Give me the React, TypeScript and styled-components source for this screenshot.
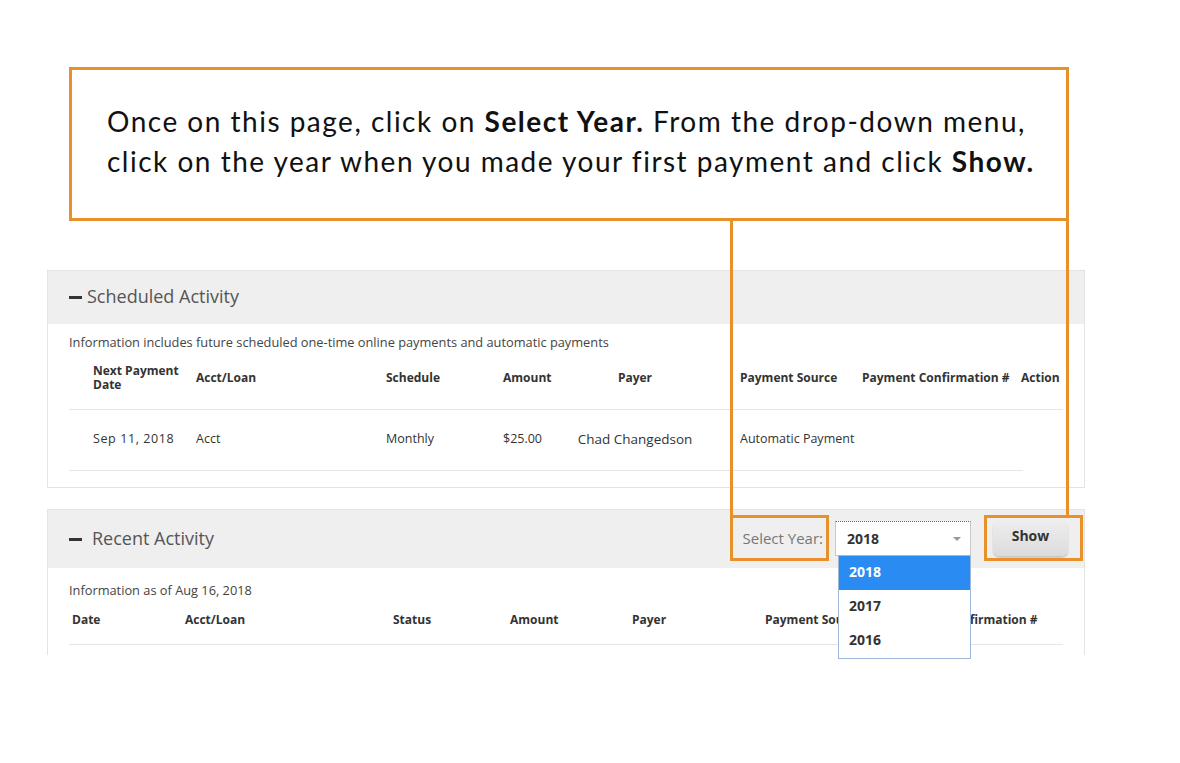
import React from "react";
import styled, { createGlobalStyle } from "styled-components";

const ORANGE = "#e8902a";
const UI_FONT = `"Open Sans", "Noto Sans", sans-serif`;

const Global = createGlobalStyle`
  html, body { margin: 0; padding: 0; background: #ffffff; }
  * { box-sizing: border-box; }
`;

const Page = styled.div`
  position: relative;
  width: 1180px;
  height: 763px;
  overflow: hidden;
  background: #fff;
  font-family: ${UI_FONT};
  color: #333;
`;

const Callout = styled.div`
  margin: 67px 0 0 69px;
  width: 1000px;
  height: 154px;
  border: 3px solid ${ORANGE};
  padding: 31px 0 0 35px;
  font-family: Lato, "Liberation Sans", sans-serif;
  font-size: 28px;
  letter-spacing: 1.5px;
  line-height: 40px;
  color: #111;
  white-space: nowrap;
  b { font-weight: 700; }
`;

const Panels = styled.div`
  margin-left: 47px;
  width: 1038px;
`;

const Panel = styled.section<{ $top: number; $open?: boolean }>`
  margin-top: ${(p) => p.$top}px;
  border: 1px solid #e3e3e3;
  border-bottom: ${(p) => (p.$open ? "none" : "1px solid #e3e3e3")};
  background: #fff;
`;

const PanelHeader = styled.div<{ $h: number }>`
  height: ${(p) => p.$h}px;
  background: #efefef;
  display: flex;
  align-items: center;
  padding: 0 16px 0 21px;
`;

const Minus = styled.span<{ $gap: number }>`
  display: inline-block;
  width: 13px;
  height: 3px;
  background: #333;
  margin-right: ${(p) => p.$gap}px;
`;

const Title = styled.h2`
  margin: 0 0 3px;
  font-family: ${UI_FONT};
  font-weight: 400;
  font-size: 18px;
  color: #555;
  flex: 1;
`;

const Body = styled.div<{ $pt: number; $pb: number }>`
  padding: ${(p) => p.$pt}px 21px ${(p) => p.$pb}px 21px;
`;

const Info = styled.div`
  font-size: 12.8px;
  line-height: 16px;
  color: #444;
`;

const Grid = styled.div<{ $cols: string; $h: number; $inset?: number; $pb?: number }>`
  display: grid;
  grid-template-columns: ${(p) => p.$cols};
  align-items: center;
  height: ${(p) => p.$h}px;
  padding-bottom: ${(p) => p.$pb ?? 0}px;
  border-bottom: 1px solid #e6e6e6;
  margin-right: ${(p) => p.$inset ?? 0}px;
`;

const Th = styled.div<{ $pl?: number; $center?: boolean }>`
  font-size: 12px;
  font-weight: 700;
  line-height: 14px;
  color: #333;
  padding-left: ${(p) => p.$pl ?? 0}px;
  text-align: ${(p) => (p.$center ? "center" : "left")};
  white-space: nowrap;
`;

const Td = styled.div<{ $pl?: number; $center?: boolean; $big?: boolean; $wide?: boolean }>`
  font-size: ${(p) => (p.$big ? 13.5 : 12.5)}px;
  letter-spacing: ${(p) => (p.$wide ? 0.6 : 0)}px;
  color: #333;
  padding-left: ${(p) => p.$pl ?? 0}px;
  text-align: ${(p) => (p.$center ? "center" : "left")};
  white-space: nowrap;
`;

const Controls = styled.div`
  display: flex;
  align-items: center;
  margin-bottom: 2px;
`;

const YearLabel = styled.span`
  font-size: 15px;
  color: #777;
  margin-right: 12px;
`;

const SelectWrap = styled.div`
  position: relative;
  width: 136px;
  height: 35px;
  background: #fff;
  border: 1px solid #c9c9c9;
  border-top: 1px dotted #666;
  display: flex;
  align-items: center;
  padding-left: 11px;
  margin-right: 22px;
  font-size: 14px;
  font-weight: 700;
  color: #333;
`;

const Caret = styled.span`
  position: absolute;
  right: 9px;
  top: 15px;
  width: 0;
  height: 0;
  border-left: 4px solid transparent;
  border-right: 4px solid transparent;
  border-top: 4px solid #999;
`;

const DropList = styled.ul`
  position: absolute;
  top: 33px;
  left: 2px;
  width: 133px;
  margin: 0;
  padding: 0;
  list-style: none;
  background: #fff;
  border: 1px solid #9fb8d8;
  z-index: 5;
`;

const DropItem = styled.li<{ $active?: boolean }>`
  height: 34px;
  display: flex;
  align-items: center;
  padding-left: 10px;
  padding-bottom: 2px;
  font-size: 14px;
  font-weight: 700;
  color: ${(p) => (p.$active ? "#fff" : "#333")};
  background: ${(p) => (p.$active ? "#2a8cf2" : "#fff")};
`;

const ShowButton = styled.button`
  width: 75px;
  height: 36px;
  border: none;
  border-radius: 7px;
  background: linear-gradient(#eeeeee, #dcdcdc);
  box-shadow: 0 2px 2px rgba(0, 0, 0, 0.18);
  font-family: ${UI_FONT};
  font-size: 14px;
  font-weight: 700;
  color: #333;
  padding: 0 0 6px;
`;

const Connector = styled.div<{ $left: number }>`
  position: absolute;
  left: ${(p) => p.$left}px;
  top: 220px;
  width: 3px;
  height: 296px;
  background: ${ORANGE};
  z-index: 6;
`;

const Highlight = styled.div<{ $left: number }>`
  position: absolute;
  left: ${(p) => p.$left}px;
  top: 515px;
  width: 99px;
  height: 46px;
  border: 3px solid ${ORANGE};
  z-index: 6;
`;

const schedCols = "127px 190px 117px 57px 150px 152px 159px 41px";
const recentCols = "116px 208px 117px 122px 133px 125px 172px";

export default function App() {
  return (
    <>
      <Global />
      <Page>
        <Callout>
          Once on this page, click on <b>Select Year.</b> From the drop-down menu,
          <br />
          click on the year when you made your first payment and click <b>Show.</b>
        </Callout>

        <Panels>
          <Panel $top={49}>
            <PanelHeader $h={53}>
              <Minus $gap={5} />
              <Title>Scheduled Activity</Title>
            </PanelHeader>
            <Body $pt={10} $pb={16}>
              <Info>Information includes future scheduled one-time online payments and automatic payments</Info>
              <Grid $cols={schedCols} $h={60} $pb={4}>
                <Th $pl={24}>
                  Next Payment
                  <br />
                  Date
                </Th>
                <Th>Acct/Loan</Th>
                <Th>Schedule</Th>
                <Th>Amount</Th>
                <Th $center>Payer</Th>
                <Th $pl={30}>Payment Source</Th>
                <Th>Payment Confirmation #</Th>
                <Th>Action</Th>
              </Grid>
              <Grid $cols={schedCols} $h={61} $inset={40} $pb={3}>
                <Td $pl={24} $wide>Sep 11, 2018</Td>
                <Td>Acct</Td>
                <Td>Monthly</Td>
                <Td>$25.00</Td>
                <Td $center $big>Chad Changedson</Td>
                <Td $pl={30}>Automatic Payment</Td>
                <Td />
                <Td />
              </Grid>
            </Body>
          </Panel>

          <Panel $top={21} $open>
            <PanelHeader $h={58}>
              <Minus $gap={10} />
              <Title>Recent Activity</Title>
              <Controls>
                <YearLabel>Select Year:</YearLabel>
                <SelectWrap>
                  2018
                  <Caret />
                  <DropList>
                    <DropItem $active>2018</DropItem>
                    <DropItem>2017</DropItem>
                    <DropItem>2016</DropItem>
                  </DropList>
                </SelectWrap>
                <ShowButton>Show</ShowButton>
              </Controls>
            </PanelHeader>
            <Body $pt={14} $pb={10}>
              <Info>Information as of Aug 16, 2018</Info>
              <Grid $cols={recentCols} $h={47} $pb={2}>
                <Th $pl={3}>Date</Th>
                <Th>Acct/Loan</Th>
                <Th>Status</Th>
                <Th>Amount</Th>
                <Th>Payer</Th>
                <Th>Payment Source</Th>
                <Th>Payment Confirmation #</Th>
              </Grid>
            </Body>
          </Panel>
        </Panels>

        <Connector $left={730} />
        <Connector $left={1066} />
        <Highlight $left={730} />
        <Highlight $left={984} />
      </Page>
    </>
  );
}
